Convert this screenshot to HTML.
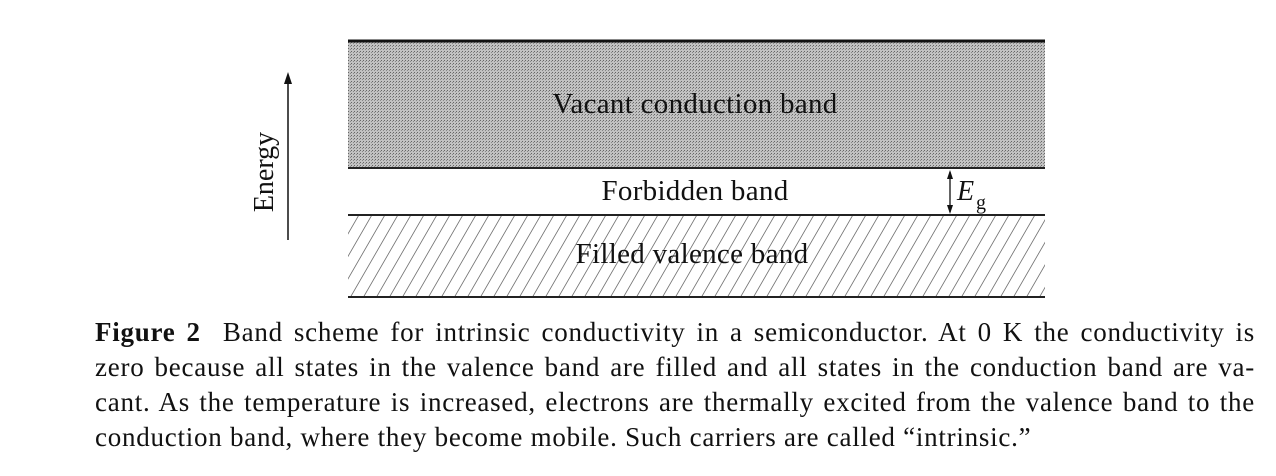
<!DOCTYPE html>
<html><head><meta charset="utf-8"><style>
body{margin:0;width:1276px;height:476px;background:#fff;position:relative;overflow:hidden;font-family:"Liberation Serif",serif;color:#111}
.abs{position:absolute}
.cap{position:absolute;left:95px;top:315px;width:1160px;font-size:27px;line-height:35px;letter-spacing:0.75px}
.cap div{text-align:justify;text-align-last:justify;white-space:nowrap}
.cap div.last{text-align-last:left}
</style></head><body>
<svg class="abs" style="left:0;top:0" width="1276" height="310">
<defs>
<pattern id="dots" width="3" height="3" patternUnits="userSpaceOnUse">
<rect width="3" height="3" fill="#c2c2c2"/><rect width="1" height="1" fill="#666"/><rect x="2" y="1" width="1" height="1" fill="#888"/>
</pattern>
<pattern id="hatch" width="13" height="80" patternUnits="userSpaceOnUse" patternTransform="skewX(-30)">
<line x1="2" y1="0" x2="2" y2="80" stroke="#555" stroke-width="1"/>
</pattern>
</defs>
<rect x="348" y="41" width="697" height="127" fill="url(#dots)"/>
<line x1="348" y1="41" x2="1045" y2="41" stroke="#111" stroke-width="3"/>
<line x1="348" y1="168" x2="1045" y2="168" stroke="#222" stroke-width="2"/>
<line x1="348" y1="215" x2="1045" y2="215" stroke="#222" stroke-width="2"/>
<rect x="348" y="216" width="697" height="80" fill="url(#hatch)" opacity="0.8"/>
<line x1="348" y1="297" x2="1045" y2="297" stroke="#222" stroke-width="2"/>
<line x1="288" y1="240" x2="288" y2="80" stroke="#111" stroke-width="1.5"/>
<path d="M284 84 L288 72 L292 84 Z" fill="#111"/>
<line x1="950" y1="172" x2="950" y2="212" stroke="#111" stroke-width="1.3"/>
<path d="M947 179 L950 170 L953 179 Z" fill="#111"/>
<path d="M947 205 L950 214 L953 205 Z" fill="#111"/>
<text x="695" y="113" font-family="Liberation Serif" font-size="29" letter-spacing="0.3" text-anchor="middle" fill="#111">Vacant conduction band</text>
<text x="695" y="200" font-family="Liberation Serif" font-size="29" letter-spacing="0.3" text-anchor="middle" fill="#111">Forbidden band</text>
<text x="692" y="263" font-family="Liberation Serif" font-size="29" letter-spacing="0.3" text-anchor="middle" fill="#111">Filled valence band</text>
<text x="957" y="200" font-family="Liberation Serif" font-size="28" font-style="italic" fill="#111">E</text>
<text x="976" y="209" font-family="Liberation Serif" font-size="20" fill="#111">g</text>
<text transform="translate(273,172) rotate(-90)" font-family="Liberation Serif" font-size="28" text-anchor="middle" fill="#111">Energy</text>
</svg>
<div class="cap">
<div><b>Figure 2</b>&nbsp; Band scheme for intrinsic conductivity in a semiconductor. At 0 K the conductivity is</div>
<div>zero because all states in the valence band are filled and all states in the conduction band are va-</div>
<div>cant. As the temperature is increased, electrons are thermally excited from the valence band to the</div>
<div class="last">conduction band, where they become mobile. Such carriers are called “intrinsic.”</div>
</div>
</body></html>
